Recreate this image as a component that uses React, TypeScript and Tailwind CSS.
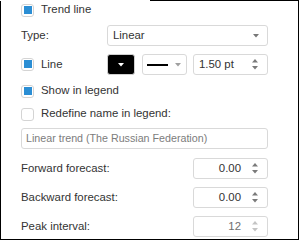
import React from "react";

const FONT = "font-['Liberation_Sans',Arial,sans-serif]";

function Caret({ color = "#777" }: { color?: string }) {
  return (
    <svg width="6" height="4" viewBox="0 0 6 4">
      <path d="M0 0h6L3 3.5z" fill={color} />
    </svg>
  );
}

function SpinArrows({ color = "#777" }: { color?: string }) {
  return (
    <div className="flex flex-col items-center gap-[3px]">
      <svg width="6" height="4" viewBox="0 0 6 4">
        <path d="M0 3.5h6L3 0z" fill={color} />
      </svg>
      <svg width="6" height="4" viewBox="0 0 6 4">
        <path d="M0 0h6L3 3.5z" fill={color} />
      </svg>
    </div>
  );
}

function Check({ checked }: { checked: boolean }) {
  return (
    <span className="w-[13px] h-[13px] shrink-0 rounded-[3px] border border-[#d4d4d4] bg-white flex items-center justify-center">
      {checked && <span className="w-[8px] h-[8px] bg-[#2b8ed4]" />}
    </span>
  );
}

function CheckRow({ checked, label }: { checked: boolean; label: string }) {
  return (
    <div className="flex items-center gap-[7px] h-[14px]">
      <Check checked={checked} />
      <span>{label}</span>
    </div>
  );
}

function Spin({ value, align = "right", muted }: { value: string; align?: "left" | "right"; muted?: boolean }) {
  return (
    <div className="w-[75px] h-[21px] rounded-[3px] border border-[#d9d9d9] flex items-center pl-[5px] pr-[9px]">
      <span className={`flex-1 ${align === "right" ? "text-right pr-[11px]" : "text-left"} ${muted ? "text-[#6f6f6f]" : ""}`}>
        {value}
      </span>
      <SpinArrows color={muted ? "#c4c4c4" : "#7a7a7a"} />
    </div>
  );
}

function NumberRow({ label, value, muted, className }: { label: string; value: string; muted?: boolean; className: string }) {
  return (
    <div className={`flex items-center w-[247px] justify-between ${className}`}>
      <span>{label}</span>
      <Spin value={value} muted={muted} />
    </div>
  );
}

export default function App() {
  return (
    <div className={`w-[300px] h-[240px] bg-white text-[11.4px] text-[#333] ${FONT}`}>
      {/* top edge: dialog frame only shows on the right half */}
      <div className="flex h-px w-[299px]">
        <div className="w-[150px] bg-white" />
        <div className="flex-1 bg-black" />
      </div>
      <div className="w-[299px] h-[239px] border-l border-r border-b border-black pl-[20px] pt-[2px] flex flex-col">
        <CheckRow checked label="Trend line" />

        <div className="flex items-center mt-[8px]">
          <span className="w-[86px]">Type:</span>
          <div className="w-[161px] h-[21px] rounded-[3px] border border-[#d9d9d9] flex items-center justify-between pl-[5px] pr-[8px]">
            <span>Linear</span>
            <Caret />
          </div>
        </div>

        <div className="flex items-center mt-[8px]">
          <div className="w-[86px] flex items-center gap-[7px]">
            <Check checked />
            <span>Line</span>
          </div>
          <div className="w-[28px] h-[21px] rounded-[3px] border border-[#d0d0d0] bg-black flex items-center justify-center">
            <Caret color="#fff" />
          </div>
          <div className="ml-[7px] w-[45px] h-[21px] rounded-[3px] border border-[#d9d9d9] flex items-center pl-[4px] pr-[5px] justify-between">
            <span className="w-[21px] h-[2px] bg-black" />
            <Caret color="#a0a0a0" />
          </div>
          <div className="ml-[6px]">
            <Spin value="1.50 pt" align="left" />
          </div>
        </div>

        <div className="mt-[9px]">
          <CheckRow checked label="Show in legend" />
        </div>
        <div className="mt-[9px]">
          <CheckRow checked={false} label="Redefine name in legend:" />
        </div>

        <div className="mt-[7px] w-[247px] h-[21px] rounded-[3px] border border-[#d9d9d9] flex items-center pl-[4px] text-[10.7px] text-[#7c7c7c]">
          Linear trend (The Russian Federation)
        </div>

        <NumberRow className="mt-[9px]" label="Forward forecast:" value="0.00" />
        <NumberRow className="mt-[8px]" label="Backward forecast:" value="0.00" />
        <NumberRow className="mt-[8px]" label="Peak interval:" value="12" muted />
      </div>
    </div>
  );
}
